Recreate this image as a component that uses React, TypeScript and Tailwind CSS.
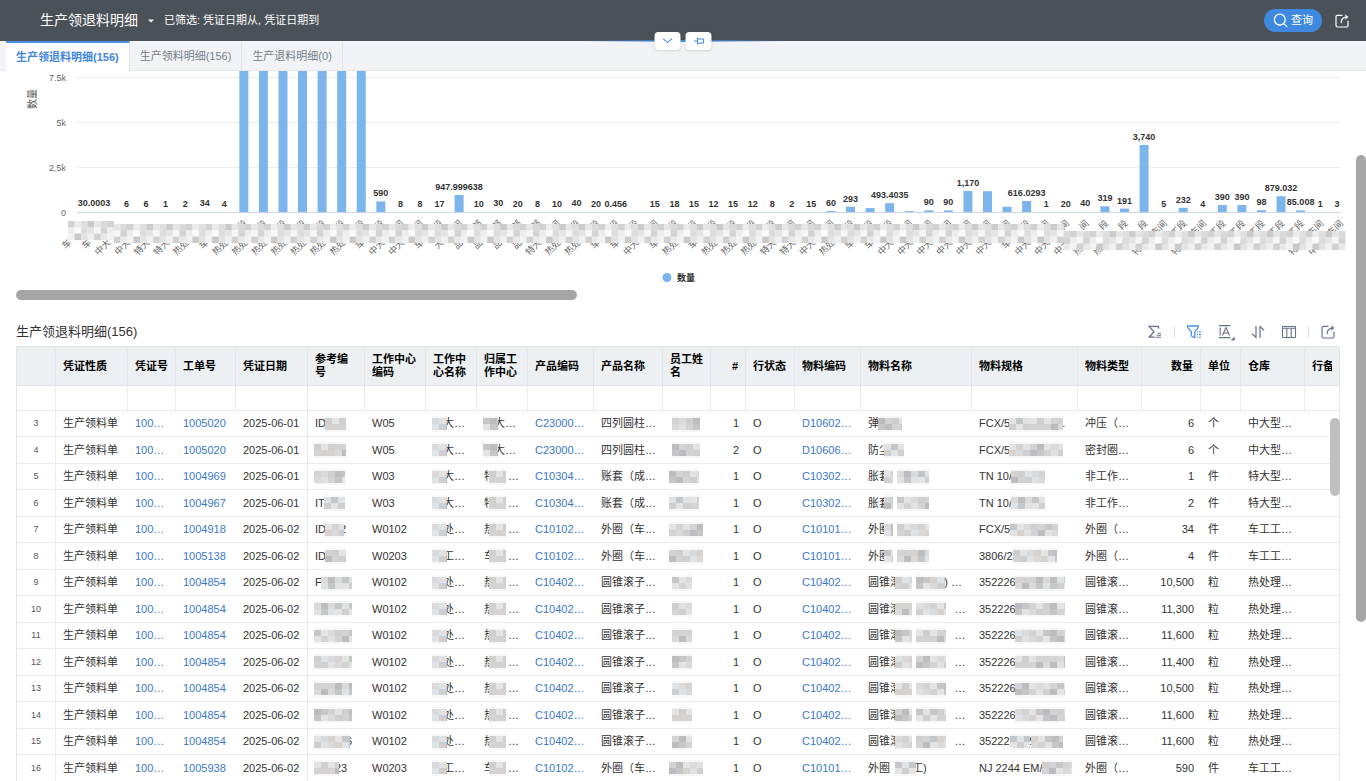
import React from 'react';

type Point = [value: number, label: string, category: string];

// category names: masked characters are kept as ideographic spaces
const points: Point[] = [
  [30.0003, '30.0003', '车　　　'],
  [20, '', '车　　　'],
  [6, '6', '中大　　　'],
  [6, '6', '中大　　　'],
  [1, '1', '特大　　　'],
  [2, '2', '特大　　　'],
  [34, '34', '热处　　　'],
  [4, '4', '车　　　'],
  [10500, '', '热处　　段'],
  [11300, '', '热处　　段'],
  [11600, '', '热处　　段'],
  [11400, '', '热处　　段'],
  [10500, '', '热处　　段'],
  [11600, '', '热处　　段'],
  [11600, '', '热处　　段'],
  [590, '590', '车　　段'],
  [8, '8', '中大　　间'],
  [8, '8', '中大　　间'],
  [17, '17', '车　　段'],
  [947.999638, '947.999638', '大　　间'],
  [10, '10', '品　　部'],
  [30, '30', '品　　部'],
  [20, '20', '品　　部'],
  [8, '8', '品　　部'],
  [10, '10', '特大　　间'],
  [40, '40', '热处　　段'],
  [20, '20', '热处　　段'],
  [0.456, '0.456', '车　　段'],
  [3, '', '车　　段'],
  [15, '15', '中大　　间'],
  [18, '18', '车　　段'],
  [15, '15', '热处　　段'],
  [12, '12', '车　　段'],
  [15, '15', '热处　　段'],
  [12, '12', '热处　　段'],
  [8, '8', '热处　　段'],
  [2, '2', '特大　　间'],
  [15, '15', '特大　　间'],
  [60, '60', '中大　　间'],
  [293, '293', '热处　　段'],
  [220, '', '车　　段'],
  [493.4035, '493.4035', '车　　段'],
  [50, '', '中大　　间'],
  [90, '90', '中大　　间'],
  [90, '90', '中大　　间'],
  [1170, '1,170', '中大　　间'],
  [1160, '', '中大　　间'],
  [290, '', '中大　　间'],
  [616.0293, '616.0293', '车　　段'],
  [1, '1', '中大　　间'],
  [20, '20', '中大　　间'],
  [40, '40', '中大　　间'],
  [319, '319', '热处　　段'],
  [191, '191', '热处　　段'],
  [3740, '3,740', '车　　段'],
  [5, '5', '特大　车间'],
  [232, '232', '车　工段'],
  [4, '4', '特大　车间'],
  [390, '390', '车　工段'],
  [390, '390', '车　工段'],
  [98, '98', '车　工段'],
  [879.032, '879.032', '车　工段'],
  [85.008, '85.008', '车　工段'],
  [1, '1', '特大　车间'],
  [3, '3', '中大　车间'],
];

const PLOT_LEFT = 61;
const PLOT_RIGHT = 1324;
const BASELINE = 141;
const STEP = 19.57;
const PX_PER_UNIT = 44.8 / 2500;

const centerOf = (i: number) => PLOT_LEFT + 0.5 + STEP * (i + 0.5);

const bandTones = [
  ['#d2d2d2', '#ececec', '#dfdfdf', '#cbcbcb', '#e6e6e6', '#dadada'],
  ['#ededed', '#fafafa', '#dcdcdc', '#e4e4e4', '#f6f6f6', '#d3d3d3'],
  ['#f2f2f2', '#c9c9c9', '#e3e3e3', '#f0f0f0', '#d1d1d1', '#e9e9e9'],
];

const cellTones = ['#e4e4e4', '#d3d3d3', '#dadada', '#c4c6c7', '#cfcfcf', '#d5d2d0', '#bdbdbf', '#e0e3e6'];

const bandTop = (x: number) => {
  if (x < 95) return 150;
  if (x < 1044) return 153;
  return 160;
};

const CategoryMask: React.FC = () => {
  const cells = [];
  for (let c = 0; c < 195; c++) {
    const x = 52 + c * 6.55;
    const shift = Math.floor(c / 7) % 2 === 0 ? 0 : 3;
    for (let r = 0; r < 3; r++) {
      cells.push(
        <rect
          key={`${c}-${r}`}
          x={x}
          y={bandTop(x) + r * 6.3}
          width={6.7}
          height={6.5}
          fill={bandTones[r][(c + shift) % 6]}
        />
      );
    }
  }
  return <g>{cells}</g>;
};

const Chart: React.FC = () => (
  <svg viewBox="0 0 1324 219" className="block h-auto w-full overflow-visible" fontSize={9} role="img" aria-label="数量">
    {[
      ['7.5k', 6.5],
      ['5k', 51.5],
      ['2.5k', 96.5],
    ].map(([text, y]) => (
      <g key={text}>
        <line x1={PLOT_LEFT} x2={PLOT_RIGHT} y1={y} y2={y} stroke="#ececec" />
        <text x={50} y={Number(y) + 3} textAnchor="end" fill="#666666">
          {text}
        </text>
      </g>
    ))}
    <text x={50} y={145} textAnchor="end" fill="#666666">0</text>
    <text transform="translate(20 28) rotate(-90)" textAnchor="middle" fontSize={10} fill="#555555">
      数量
    </text>

    {points.map(([value, , category], i) => {
      const x = centerOf(i);
      const height = Math.min(value * PX_PER_UNIT, BASELINE);
      return (
        <g key={i}>
          {height > 0.8 && <rect x={x - 4.5} y={BASELINE - height} width={9} height={height} fill="#7cb5ec" />}
          <text transform={`translate(${x + 4} 153) rotate(-45)`} textAnchor="end" fill="#666666">
            {category}
          </text>
        </g>
      );
    })}
    <line x1={PLOT_LEFT} x2={PLOT_RIGHT} y1={BASELINE + 0.5} y2={BASELINE + 0.5} stroke="#ccd6eb" />
    <CategoryMask />

    {points.map(([value, label], i) => {
      if (!label) return null;
      let x = centerOf(i);
      if (i === 0) x = PLOT_LEFT + 17;
      if (i === points.length - 1) x = PLOT_RIGHT - 3;
      return (
        <text
          key={i}
          x={x}
          y={BASELINE - value * PX_PER_UNIT - 5}
          textAnchor="middle"
          fontWeight="bold"
          fill="#333333"
          stroke="#ffffff"
          strokeWidth={2}
          paintOrder="stroke"
        >
          {label}
        </text>
      );
    })}

    <circle cx={651} cy={206.5} r={4.5} fill="#7cb5ec" />
    <text x={661} y={210} fontWeight="bold" fill="#333333">数量</text>
  </svg>
);

// a number is the width of a masked run, a negative one also covers half of the character before it
type Token = string | number;

const Mask: React.FC<{ width: number; seed: number; lap: boolean }> = ({ width, seed, lap }) => {
  const cols = Math.ceil(width / 7);
  return (
    <svg width={width} height={16} className={`relative shrink-0 -mr-1 ${lap ? '-ml-[6px]' : '-ml-px'}`} aria-hidden="true">
      <rect width={width} height={16} fill="#f7f7f7" />
      {Array.from({ length: cols * 2 }, (_, n) => {
        const c = n % cols;
        const r = Math.floor(n / cols);
        return (
          <rect
            key={n}
            x={c * 7}
            y={2 + r * 6}
            width={7}
            height={6}
            fill={cellTones[(c * 3 + r * 5 + seed + ((c * seed) % 3)) % 8]}
          />
        );
      })}
    </svg>
  );
};

const Masked: React.FC<{ tokens: Token[]; seed: number }> = ({ tokens, seed }) => (
  <div className="flex items-center whitespace-pre">
    {tokens.map((token, i) =>
      typeof token === 'number' ? (
        <Mask key={i} width={Math.abs(token)} seed={seed + i} lap={token < 0} />
      ) : (
        <span key={i}>{token}</span>
      )
    )}
  </div>
);

interface Row {
  no: number;
  order: string;
  date: string;
  ref: Token[];
  center: string;
  centerName: Token[];
  owner: Token[];
  product: string;
  productName: string;
  staff: Token[];
  line: number;
  item: string;
  itemName: Token[];
  spec: Token[];
  type: string;
  qty: string;
  unit: string;
  store: string;
}

const roller = (no: number, qty: string, ref: Token[], spec: Token[], itemName: Token[] = ['圆锥滚', -17, '   ', 30, '    …']): Row => ({
  no,
  order: '1004854',
  date: '2025-06-02',
  ref,
  center: 'W0102',
  centerName: [15, '处…'],
  owner: ['热', -17, '  …'],
  product: 'C10402…',
  productName: '圆锥滚子…',
  staff: [' ', 20],
  line: 1,
  item: 'C10402…',
  itemName,
  spec,
  type: '圆锥滚…',
  qty,
  unit: '粒',
  store: '热处理…',
});

const rows: Row[] = [
  { no: 3, order: '1005020', date: '2025-06-01', ref: ['ID', 21], center: 'W05', centerName: [15, '大…'], owner: [15, '大…'], product: 'C23000…', productName: '四列圆柱…', staff: [' ', 28], line: 1, item: 'D10602…', itemName: ['弹', 24], spec: ['FCX/5', 54, ' .'], type: '冲压（…', qty: '6', unit: '个', store: '中大型…' },
  { no: 4, order: '1005020', date: '2025-06-01', ref: [32], center: 'W05', centerName: [15, '大…'], owner: [15, '大…'], product: 'C23000…', productName: '四列圆柱…', staff: [' ', 28], line: 2, item: 'D10606…', itemName: ['防尘', -20], spec: ['FCX/5', 54], type: '密封圈…', qty: '6', unit: '个', store: '中大型…' },
  { no: 5, order: '1004969', date: '2025-06-01', ref: [31], center: 'W03', centerName: [15, '大…'], owner: ['特', -17, '  …'], product: 'C10304…', productName: '账套（成…', staff: [30], line: 1, item: 'C10302…', itemName: ['胀套', -9, '   ', 32], spec: ['TN 10/', 34], type: '非工作…', qty: '1', unit: '件', store: '特大型…' },
  { no: 6, order: '1004967', date: '2025-06-01', ref: ['IT', 21], center: 'W03', centerName: [15, '大…'], owner: ['特', -17, '  …'], product: 'C10304…', productName: '账套（成…', staff: [30], line: 1, item: 'C10302…', itemName: ['胀套', -9, '   ', 32], spec: ['TN 10/', 34], type: '非工作…', qty: '2', unit: '件', store: '特大型…' },
  { no: 7, order: '1004918', date: '2025-06-02', ref: ['ID', 19, '2'], center: 'W0102', centerName: [15, '处…'], owner: ['热', -17, '  …'], product: 'C10102…', productName: '外圈（车…', staff: [34], line: 1, item: 'C10101…', itemName: ['外圈', -9, '   ', 32], spec: ['FCX/58', -48], type: '外圈（…', qty: '34', unit: '件', store: '车工工…' },
  { no: 8, order: '1005138', date: '2025-06-02', ref: ['ID', 21], center: 'W0203', centerName: [15, '工…'], owner: ['车', -17, '  …'], product: 'C10102…', productName: '外圈（车…', staff: [34], line: 1, item: 'C10101…', itemName: ['外圈', -9, '   ', 32], spec: ['3806/27', -44], type: '外圈（…', qty: '4', unit: '件', store: '车工工…' },
  roller(9, '10,500', ['F', 31], ['352226', 50], ['圆锥滚', -17, '   ', 29, ' ) …']),
  roller(10, '11,300', [38], ['352226', 50]),
  roller(11, '11,600', [38], ['352226', 50]),
  roller(12, '11,400', [38], ['352226', 50]),
  roller(13, '10,500', [38], ['352226', 50]),
  roller(14, '11,600', [38], ['352226', 50]),
  roller(15, '11,600', [36, '6'], ['352226', -20, '2', 32]),
  { no: 16, order: '1005938', date: '2025-06-02', ref: [25, '23'], center: 'W0203', centerName: [15, '工…'], owner: ['车', -17, '  …'], product: 'C10102…', productName: '外圈（车…', staff: [34], line: 1, item: 'C10101…', itemName: ['外圈  ', 21, '工)'], spec: ['NJ 2244 EM/', 30], type: '外圈（…', qty: '590', unit: '件', store: '车工工…' },
];

const columns: { lines: string[]; width: string; right?: boolean }[] = [
  { lines: [''], width: 'w-[39px]' },
  { lines: ['凭证性质'], width: 'w-[72px]' },
  { lines: ['凭证号'], width: 'w-[48px]' },
  { lines: ['工单号'], width: 'w-[60px]' },
  { lines: ['凭证日期'], width: 'w-[72px]' },
  { lines: ['参考编', '号'], width: 'w-[57px]' },
  { lines: ['工作中心', '编码'], width: 'w-[61px]' },
  { lines: ['工作中', '心名称'], width: 'w-[51px]' },
  { lines: ['归属工', '作中心'], width: 'w-[51px]' },
  { lines: ['产品编码'], width: 'w-[66px]' },
  { lines: ['产品名称'], width: 'w-[69px]' },
  { lines: ['员工姓', '名'], width: 'w-[48px]' },
  { lines: ['#'], width: 'w-[35px]', right: true },
  { lines: ['行状态'], width: 'w-[49px]' },
  { lines: ['物料编码'], width: 'w-[66px]' },
  { lines: ['物料名称'], width: 'w-[111px]' },
  { lines: ['物料规格'], width: 'w-[106px]' },
  { lines: ['物料类型'], width: 'w-[64px]' },
  { lines: ['数量'], width: 'w-[59px]', right: true },
  { lines: ['单位'], width: 'w-[40px]' },
  { lines: ['仓库'], width: 'w-[64px]' },
  { lines: ['行备'], width: 'w-auto' },
];

const linkClass = 'text-[#3a78c9] hover:underline';

const DetailTable: React.FC = () => (
  <table className="w-full table-fixed border-separate border-spacing-0 border-l border-t border-[#e4e7ea] text-[11px] leading-[13px] text-[#333333]">
    <colgroup>
      {columns.map((col, i) => (
        <col key={i} className={col.width} />
      ))}
    </colgroup>
    <thead>
      <tr className="h-[39px] bg-[#edf0f2] text-black">
        {columns.map((col, i) => (
          <th key={i} className={`border-r border-b border-[#e1e4e8] px-[7px] font-bold ${col.right ? 'text-right' : 'text-left'}`}>
            <div className="overflow-hidden whitespace-nowrap">
              {col.lines.map((line) => (
                <div key={line}>{line}</div>
              ))}
            </div>
          </th>
        ))}
      </tr>
      <tr className="h-[25px]">
        {columns.map((_, i) => (
          <td key={i} className="border-r border-b border-[#ebebee]" />
        ))}
      </tr>
    </thead>
    <tbody>
      {rows.map((row) => (
        <tr key={row.no} className="h-[26px] even:h-[27px] whitespace-nowrap [&>td]:border-b [&>td]:border-[#ebebee] [&>td]:px-[7px]">
          <td className="border-r text-center text-[9px] text-[#555555]">{row.no}</td>
          <td>生产领料单</td>
          <td><a href="#voucher" className={linkClass}>100…</a></td>
          <td><a href="#order" className={linkClass}>{row.order}</a></td>
          <td className="border-r">{row.date}</td>
          <td><Masked tokens={row.ref} seed={row.no} /></td>
          <td>{row.center}</td>
          <td><Masked tokens={row.centerName} seed={2} /></td>
          <td><Masked tokens={row.owner} seed={3} /></td>
          <td><a href="#product" className={linkClass}>{row.product}</a></td>
          <td>{row.productName}</td>
          <td><Masked tokens={row.staff} seed={row.no + 1} /></td>
          <td className="text-right">{row.line}</td>
          <td>O</td>
          <td><a href="#item" className={linkClass}>{row.item}</a></td>
          <td><Masked tokens={row.itemName} seed={row.no + 2} /></td>
          <td><Masked tokens={row.spec} seed={row.no + 3} /></td>
          <td>{row.type}</td>
          <td className="text-right">{row.qty}</td>
          <td>{row.unit}</td>
          <td>{row.store}</td>
          <td className="border-r" />
        </tr>
      ))}
    </tbody>
  </table>
);

const ExportIcon: React.FC = () => (
  <svg width="16" height="16" viewBox="0 0 16 16" fill="none" stroke="currentColor" strokeWidth="1.2" strokeLinecap="round" strokeLinejoin="round">
    <path d="M8 2.4H3.4Q2 2.4 2 3.8v8.8Q2 14 3.4 14h9.2q1.4 0 1.4-1.4V8.2" />
    <path d="M7.2 9.6c0-3.4 1.8-5.4 5.6-5.6" />
    <path d="M11.6 1.8 14.2 4l-2.6 2.2z" fill="currentColor" strokeWidth="0.4" />
  </svg>
);

const Toolbar: React.FC = () => (
  <div className="flex items-center pr-1 text-[#65728a]">
    <button aria-label="合计">
      <svg width="16" height="16" viewBox="0 0 16 16" fill="none" stroke="currentColor" strokeWidth="1.3">
        <path d="M11.5 4.4V2.4H2.2L7 7.8l-4.8 5.4h5.6" />
        <path d="M10.6 9.2H14M9.8 11.2H14M8.8 13.2H14" strokeWidth="1.1" />
      </svg>
    </button>
    <span className="mx-[11px] h-3 w-px bg-[#d9dce0]" />
    <div className="flex items-center gap-[15px]">
      <button aria-label="筛选" className="text-[#4a8fe3]">
        <svg width="16" height="16" viewBox="0 0 16 16" fill="none" stroke="currentColor" strokeWidth="1.3" strokeLinejoin="round">
          <path d="M1.6 2h10.6v1.6L8.8 7.6v6.2L5.4 12V7.6L1.6 3.6z" />
          <path d="M11 8h4M11 10.6h4M11 13.2h4" strokeWidth="1.1" strokeDasharray="1 0.8 3" />
        </svg>
      </button>
      <button aria-label="字体">
        <svg width="18" height="18" viewBox="0 0 18 18" fill="none" stroke="currentColor" strokeWidth="1.1">
          <path d="M2 2.6h11.5M2 14.6h11.5M3.2 4.6v8" />
          <path d="M5.4 12.6 9 4.6l3.6 8M6.6 10h4.8" />
          <path d="M17.6 13.6v4h-4z" fill="currentColor" stroke="none" />
        </svg>
      </button>
      <button aria-label="排序">
        <svg width="16" height="16" viewBox="0 0 16 16" fill="none" stroke="currentColor" strokeWidth="1.2">
          <path d="M6 2v11.4L2 9.8M10 14V2.6l4 3.6" />
        </svg>
      </button>
      <button aria-label="列">
        <svg width="16" height="16" viewBox="0 0 16 16" fill="none" stroke="currentColor" strokeWidth="1.1">
          <rect x="1.5" y="2.5" width="13" height="11" rx="0.6" />
          <path d="M1.5 4.2h13M5.8 4.2v9.3M10.2 4.2v9.3" />
        </svg>
      </button>
    </div>
    <span className="mx-[11px] h-3 w-px bg-[#d9dce0]" />
    <button aria-label="导出">
      <ExportIcon />
    </button>
  </div>
);

const Header: React.FC = () => (
  <header className="relative z-10 flex h-[41px] shrink-0 items-center justify-between bg-[#4b5158] pl-10 pr-4 text-white">
    <div className="flex items-center">
      <h1 className="text-[14px]">生产领退料明细</h1>
      <button aria-label="切换视图" className="ml-[10px]">
        <svg width="6" height="4" viewBox="0 0 6 4" fill="currentColor">
          <path d="M0 0.4h6L3 3.6z" />
        </svg>
      </button>
      <span className="ml-[10px] text-[11px]">已筛选: 凭证日期从, 凭证日期到</span>
    </div>
    <div className="flex items-center gap-3">
      <button className="flex h-[23px] items-center gap-[3px] rounded-full bg-[#3f8ae0] px-[9px] text-[11px]">
        <svg width="15" height="15" viewBox="0 0 15 15" fill="none" stroke="currentColor" strokeWidth="1.3" strokeLinecap="round">
          <circle cx="6.8" cy="6.6" r="5.4" />
          <path d="m10.8 10.6 3.2 3" />
        </svg>
        查询
      </button>
      <button aria-label="导出">
        <ExportIcon />
      </button>
    </div>

    {/* collapse and pin handles on the header edge */}
    <div className="absolute -bottom-px left-1/2 h-0.5 w-48 -translate-x-1/2 bg-linear-to-r from-transparent via-[#4a90e2] to-transparent" />
    <div className="absolute left-1/2 top-8 flex -translate-x-1/2 gap-[5px] text-[#4a90e2]">
      <button aria-label="展开" className="flex h-[18px] w-[26px] items-center justify-center rounded-sm bg-white shadow">
        <svg width="10" height="6" viewBox="0 0 10 6" fill="none" stroke="currentColor" strokeWidth="1.1">
          <path d="m0.6 0.6 4.4 4 4.4-4" />
        </svg>
      </button>
      <button aria-label="固定" className="flex h-[18px] w-[26px] items-center justify-center rounded-sm bg-white shadow">
        <svg width="11" height="8" viewBox="0 0 11 8" fill="none" stroke="currentColor" strokeWidth="1.1">
          <path d="M0.4 4h3.4M4 0.6v6.8M4 1.2l2 .8h4v4H6l-2 .8" />
        </svg>
      </button>
    </div>
  </header>
);

const App: React.FC = () => {
  return (
    <div className="relative flex h-screen flex-col overflow-hidden bg-white font-['Liberation_Sans','Noto_Sans_CJK_SC',sans-serif]">
      <Header />

      {/* Tabs */}
      <nav className="flex h-[30px] shrink-0 border-b border-[#e6e8ed] bg-[#f1f3f7] pl-[6px] text-[11px] text-[#74808a]">
        <button className="-mb-px border-r border-t-2 border-r-[#dfe2e8] border-t-[#4a90e2] bg-white px-[10px] font-bold text-[#3f86dd]">
          生产领退料明细(156)
        </button>
        <button className="border-r border-t-2 border-r-[#e0e3e8] border-t-transparent px-[10px]">生产领料明细(156)</button>
        <button className="border-r border-t-2 border-r-[#e0e3e8] border-t-transparent px-[10px]">生产退料明细(0)</button>
      </nav>

      <main className="min-h-0 flex-1 overflow-hidden pl-4 pr-[26px]">
        <Chart />
        <div className="h-[10px] w-[42.4%] rounded-full bg-[#a6a6a6]" />

        <div className="mt-[18px] flex h-7 items-center justify-between">
          <h2 className="text-[13px] text-[#333333]">生产领退料明细(156)</h2>
          <Toolbar />
        </div>
        <div className="relative">
          <DetailTable />
          <div className="absolute right-0 top-[72px] h-[78px] w-[10px] rounded-full bg-[#bfbfbf]" />
        </div>
      </main>

      <div className="absolute right-0 top-[155px] h-[467px] w-[10px] rounded-full bg-[#a6a6a6]" />
    </div>
  );
};

export default App;
